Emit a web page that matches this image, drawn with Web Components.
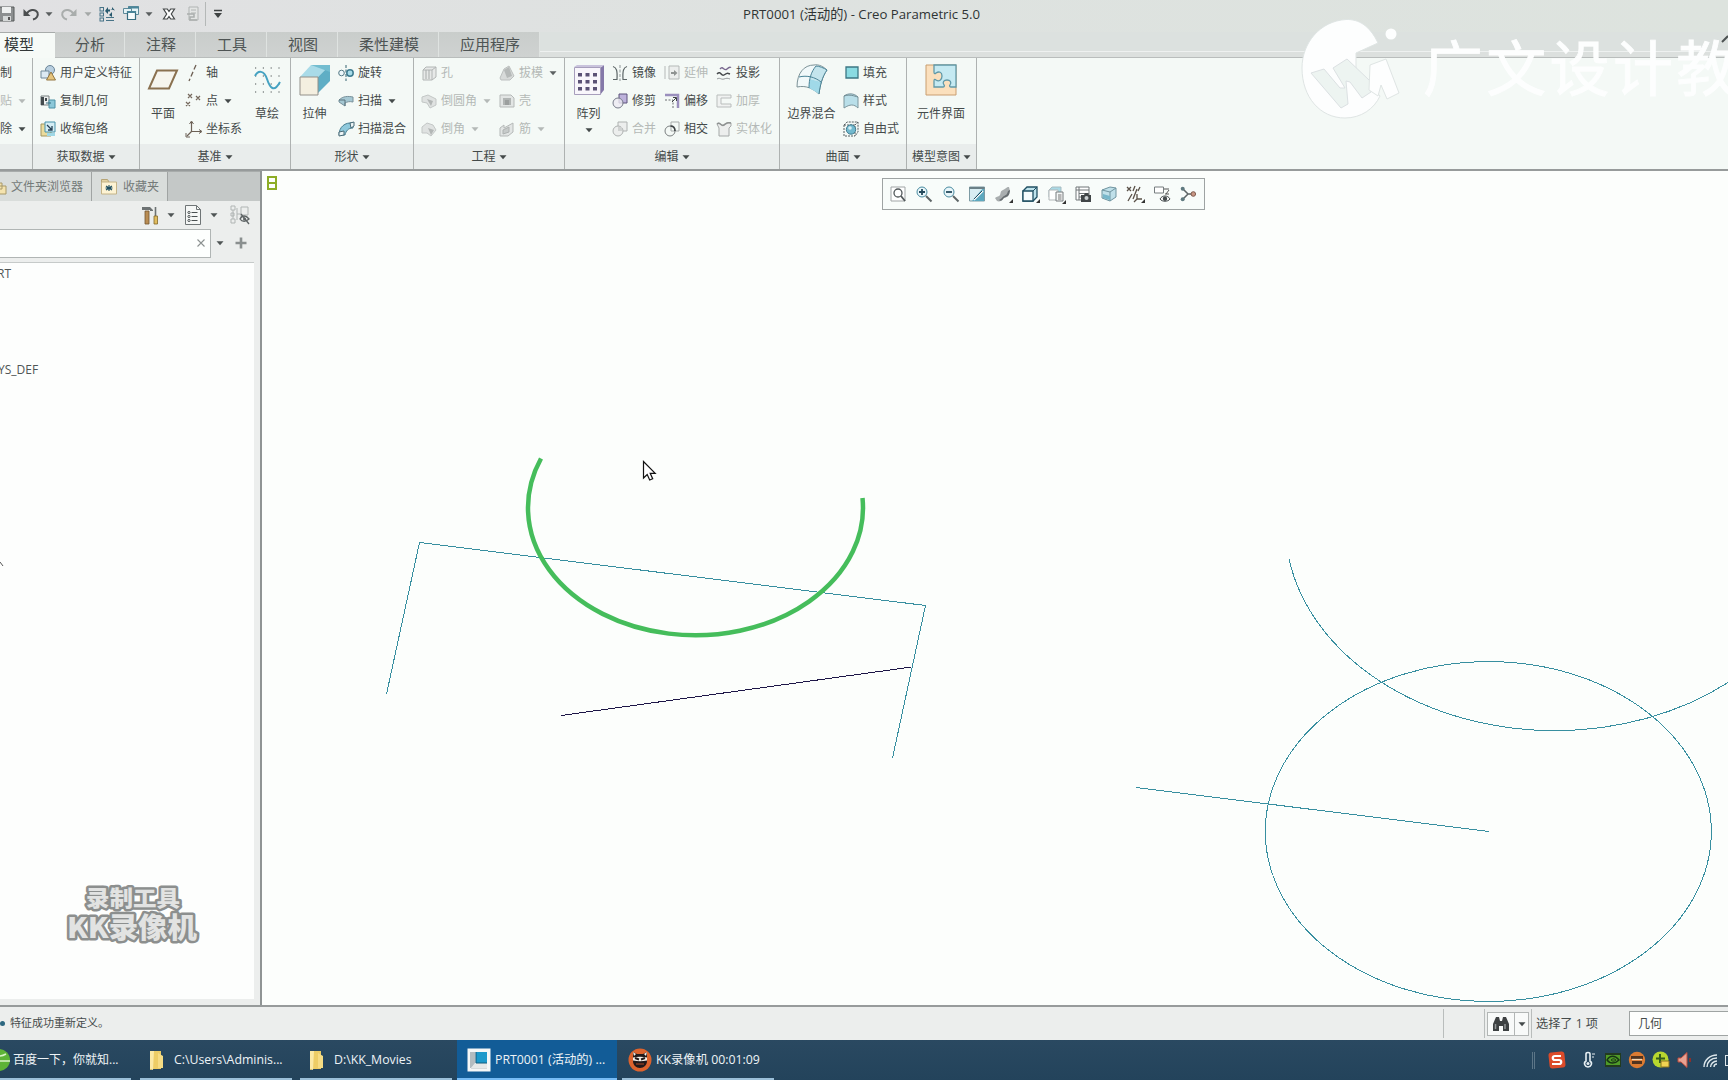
<!DOCTYPE html>
<html lang="zh-CN">
<head>
<meta charset="utf-8">
<title>PRT0001 (活动的) - Creo Parametric 5.0</title>
<style>
  * { box-sizing: border-box; }
  html, body { margin: 0; width: 1728px; height: 1080px; overflow: hidden; }
  body { font: 12px/16px "Open Sans", "Noto Sans CJK SC", sans-serif; color: #444a4a; }
</style>
</head>
<body>
<creo-window>
  <quick-bar slot="title"></quick-bar>

  <ribbon-tabs slot="tabs">
    <ribbon-tab active style="width:55px;padding-left:4px">模型</ribbon-tab>
    <ribbon-tab style="width:70px;padding-left:20px">分析</ribbon-tab>
    <ribbon-tab style="width:71px;padding-left:21px">注释</ribbon-tab>
    <ribbon-tab style="width:71px;padding-left:21px">工具</ribbon-tab>
    <ribbon-tab style="width:71px;padding-left:21px">视图</ribbon-tab>
    <ribbon-tab style="width:101px;padding-left:21px">柔性建模</ribbon-tab>
    <ribbon-tab style="width:101px;padding-left:21px">应用程序</ribbon-tab>
  </ribbon-tabs>

  <ribbon-group slot="ribbon" style="width:33px">
    <ribbon-column>
      <ribbon-button>制</ribbon-button>
      <ribbon-button menu disabled>贴</ribbon-button>
      <ribbon-button menu>除</ribbon-button>
    </ribbon-column>
  </ribbon-group>
  <ribbon-group slot="ribbon" label="获取数据" style="width:107px;--inset:7px">
    <ribbon-column>
      <ribbon-button icon="udf">用户定义特征</ribbon-button>
      <ribbon-button icon="copygeom">复制几何</ribbon-button>
      <ribbon-button icon="shrink">收缩包络</ribbon-button>
    </ribbon-column>
  </ribbon-group>
  <ribbon-group slot="ribbon" label="基准" style="width:151px">
    <ribbon-big icon="plane" style="width:46px">平面</ribbon-big>
    <ribbon-column style="width:58px">
      <ribbon-button icon="axis">轴</ribbon-button>
      <ribbon-button icon="point" menu>点</ribbon-button>
      <ribbon-button icon="csys">坐标系</ribbon-button>
    </ribbon-column>
    <ribbon-big icon="sketch" style="width:46px">草绘</ribbon-big>
  </ribbon-group>
  <ribbon-group slot="ribbon" label="形状" style="width:123px">
    <ribbon-big icon="extrude" style="width:47px">拉伸</ribbon-big>
    <ribbon-column>
      <ribbon-button icon="revolve">旋转</ribbon-button>
      <ribbon-button icon="sweep" menu>扫描</ribbon-button>
      <ribbon-button icon="blend">扫描混合</ribbon-button>
    </ribbon-column>
  </ribbon-group>
  <ribbon-group slot="ribbon" label="工程" style="width:151px;--inset:7px">
    <ribbon-column style="width:78px">
      <ribbon-button icon="hole" disabled>孔</ribbon-button>
      <ribbon-button icon="round" menu disabled>倒圆角</ribbon-button>
      <ribbon-button icon="chamfer" menu disabled>倒角</ribbon-button>
    </ribbon-column>
    <ribbon-column>
      <ribbon-button icon="draft" menu="dark" disabled>拔模</ribbon-button>
      <ribbon-button icon="shell" disabled>壳</ribbon-button>
      <ribbon-button icon="rib" menu disabled>筋</ribbon-button>
    </ribbon-column>
  </ribbon-group>
  <ribbon-group slot="ribbon" label="编辑" style="width:215px">
    <ribbon-big icon="pattern" menu style="width:47px">阵列</ribbon-big>
    <ribbon-column style="width:52px">
      <ribbon-button icon="mirror">镜像</ribbon-button>
      <ribbon-button icon="trim">修剪</ribbon-button>
      <ribbon-button icon="merge" disabled>合并</ribbon-button>
    </ribbon-column>
    <ribbon-column style="width:52px">
      <ribbon-button icon="extend" disabled>延伸</ribbon-button>
      <ribbon-button icon="offset">偏移</ribbon-button>
      <ribbon-button icon="intersect">相交</ribbon-button>
    </ribbon-column>
    <ribbon-column>
      <ribbon-button icon="project">投影</ribbon-button>
      <ribbon-button icon="thicken" disabled>加厚</ribbon-button>
      <ribbon-button icon="solidify" disabled>实体化</ribbon-button>
    </ribbon-column>
  </ribbon-group>
  <ribbon-group slot="ribbon" label="曲面" style="width:127px">
    <ribbon-big icon="boundary" style="width:63px">边界混合</ribbon-big>
    <ribbon-column>
      <ribbon-button icon="fill">填充</ribbon-button>
      <ribbon-button icon="style">样式</ribbon-button>
      <ribbon-button icon="freestyle">自由式</ribbon-button>
    </ribbon-column>
  </ribbon-group>
  <ribbon-group slot="ribbon" label="模型意图" style="width:70px">
    <ribbon-big icon="component" style="width:68px">元件界面</ribbon-big>
  </ribbon-group>

  <side-panel slot="side"></side-panel>
  <model-canvas slot="canvas"></model-canvas>
  <status-bar slot="status"></status-bar>

  <task-bar slot="taskbar">
    <task-button icon="browser" style="width:131px;padding-left:0">百度一下，你就知...</task-button>
    <task-button icon="folder" style="width:152px">C:\Users\Adminis...</task-button>
    <task-button icon="folder" style="width:152px">D:\KK_Movies</task-button>
    <task-button icon="creo" active style="width:160px">PRT0001 (活动的) ...</task-button>
    <task-button icon="kk" style="width:152px">KK录像机 00:01:09</task-button>
  </task-bar>
</creo-window>
<brand-mark></brand-mark>
<recorder-mark></recorder-mark>

<script>
// icon name -> [box size, svg body]
const ICONS = {
  save: [16, '<path d="M-1 1H14V15H-1Z" fill="#8c8f90" stroke="#565a5b"/><path d="M2 1h9v6H2z" fill="#eef0f0"/><path d="M3 10h8v5H3z" fill="#d5d8d8"/><path d="M8 11h2v3H8z" fill="#555"/>'],
  undo: [16, '<path d="M.5 3v7h7z" fill="#4c4f50"/><path d="M3.500 8C6 3.500 12 2.500 14.500 6.500c1 3-.5 6-4.500 7" fill="none" stroke="#4c4f50" stroke-width="2"/>'],
  redo: [16, '<path d="M15.500 3v7h-7z" fill="#a9adac"/><path d="M12.500 8C10 3.500 4 2.500 1.500 6.500c-1 3 .5 6 4.500 7" fill="none" stroke="#a9adac" stroke-width="2"/>'],
  regen: [16, '<g fill="none" stroke="#477387"><rect x="1" y="1.500" width="3.500" height="3.500"/><rect x="1" y="7" width="3.500" height="3"/><rect x="1" y="12" width="3.500" height="3"/><path d="M7 11.500h8M7 14.500h8"/></g><path d="M6 5 9 1v2.500h2v2H9V8zM16 4.500 13 1v2h-2M10 9l3-3v5" fill="#27586d"/>'],
  windows: [16, '<g fill="#e5f3f6" stroke="#5d8a9a"><path d="M5.500.5h10v8h-10z"/><path d="M.5 2.500h8v5h-8z"/></g><path d="M4.500 5.500h8v8h-8z" fill="#f6fbfc" stroke="#376d80" stroke-width="1.200"/><path d="M5 .5h11v2H5zM4 5h9v2H4z" fill="#4a8599"/>'],
  xout: [16, '<path d="M2.500 3h3.800L8 5.500 9.700 3h3.800l-3.200 5 3.200 5H9.700L8 10.500 6.300 13H2.500l3.200-5z" fill="#fff" stroke="#444849" stroke-width="1.200"/>'],
  closewin: [16, '<path d="M4 1h9v13H4z" fill="#e3e5e4" stroke="#b0b4b3"/><path d="M6 4h5M6 7h5" stroke="#b0b4b3"/><path d="M2 8h7v3H5v3h7" fill="none" stroke="#aaaead" stroke-width="1.500"/>'],
  custom: [10, '<path d="M1 1.500h8" stroke="#3e4242" stroke-width="1.500"/><path d="M1 4h8L5 9z" fill="#3e4242"/>'],
  caret: [8, '<path d="M.5 2.300h7L4 6.300z" fill="currentColor"/>'],

  udf: [16, '<circle cx="10" cy="5" r="4.500" fill="#b8cfe0" stroke="#6b8598"/><path d="M1 6h8v7H1z" fill="#dceaf3" stroke="#70899a"/><path d="m11 7 4.500 8h-9z" fill="#e6c57e" stroke="#937740"/>'],
  copygeom: [16, '<path d="M1 3h8v9H1z" fill="#edf0ef" stroke="#777f80"/><path d="M1 4h3v8H1zM5 5h2v3H5z" fill="#434b4e"/><path d="M9 7h6v8H9z" fill="#8cc8d9" stroke="#4c91a5"/><path d="M6 10h5" stroke="#346d80"/>'],
  shrink: [16, '<path d="M1 3h10v12H1z" fill="#eadb9c" stroke="#a29660"/><path d="M5 1h10v10H5z" fill="#d4edf4" stroke="#4692aa"/><path d="m7 4 5 5M12 5v4H8" fill="none" stroke="#243f53" stroke-width="1.300"/><path d="M7 12h8v3H7z" fill="#9fd8e6"/>'],
  plane: [32, '<path d="M10 6.500h20L22 24.500H2z" fill="#f6f5ee" stroke="#8a7150" stroke-width="2"/>'],
  axis: [16, '<path d="M10 0 3 16" stroke="#6d5f53" stroke-width="1.300" stroke-dasharray="5 2.500"/>'],
  point: [16, '<path d="m2 1 4 4m0-4L2 5m8-2 4 4m0-4-4 4M0 9l4 4m0-4-4 4" stroke="#75695d" stroke-width="1.200"/>'],
  csys: [16, '<path d="M5.500 1v9.500H15M5.500 10.500 1 15" fill="none" stroke="#6c6156" stroke-width="1.200"/><path d="m3.500 3 2-3 2 3M13 8.500l3 2-3 2M0 12v4h4" fill="none" stroke="#6c6156"/>'],
  sketch: [32, '<path d="M4 4h26M4 12h26M4 20h26M4 28h26" stroke="#4b5253" stroke-width="1.200" stroke-dasharray="1.200 6.600"/><path d="M4 12c3-6 9-6 12 3s7 14 13 3" fill="none" stroke="#45a2c2" stroke-width="2"/>'],
  extrude: [32, '<path d="M1 13 12 1h19L19 13z" fill="#a9dbe8"/><path d="M19 13 31 1v16L19 29z" fill="#5faec5"/><path d="M12 1h19v7z" fill="#73bdd0"/><path d="M1 13h18v18H1z" fill="#f4efe0" stroke="#93908a"/>'],
  revolve: [16, '<path d="M8 0v16" stroke="#356271" stroke-dasharray="3 1.500"/><circle cx="3.500" cy="8" r="2.800" fill="#eef8fb" stroke="#547985"/><circle cx="12" cy="8" r="3.200" fill="#a7dbe8" stroke="#3e7c90" stroke-width="1.500"/>'],
  sweep: [16, '<path d="M1 7c4-4 9-4 14-3v5c-4-1-6 0-8 1v3l-6-4z" fill="#a5c8d3" stroke="#77909a"/><path d="M1 7h6v6" fill="none" stroke="#5b737d"/>'],
  blend: [16, '<path d="M1 14C1 6 7 1 15 2v5c-5 0-7 3-8 7z" fill="#8fc9dc" stroke="#4c7f91"/><path d="M1 15v-4l5-1v4zM12 2l4-1v4l-3 2z" fill="#edf5f6" stroke="#486a76"/>'],
  hole: [16, '<path d="M2 5h9v10H2zM2 5l3-3h10v10l-4 3M11 5l4-3" fill="#e7e9e8" stroke="#b2b6b5"/><path d="M5 5v9M8 5v9" stroke="#a7abaa"/>'],
  round: [16, '<path d="M1 4l6-2 8 4v6l-6 3-3-5-5-1z" fill="#dfe2e1" stroke="#c3c7c6"/><path d="m6 6 6 2-2 5z" fill="#b3b7b6"/>'],
  chamfer: [16, '<path d="m1 6 5-4 6 2 3 5-5 6-4-3H1z" fill="#dfe2e1" stroke="#c3c7c6"/><path d="m7 7 6 2-3 5z" fill="#b3b7b6"/>'],
  draft: [16, '<path d="M1 13 5 4l5-3 5 10-4 4H2z" fill="#d7dad9" stroke="#bcc0bf"/><path d="m5 5 3 8 5-2-3-9" fill="#b5b9b8"/>'],
  shell: [16, '<path d="M1 2h11l3 3v9H1z" fill="#e2e5e4" stroke="#b5b9b8"/><path d="M4 5h8v7H4z" fill="#b1b5b4"/><path d="M6 7h4v5H6z" fill="#9b9f9e"/>'],
  rib: [16, '<path d="m1 7 4-3v3l9-5v9l-5 4H1z" fill="#e2e5e4" stroke="#b5b9b8"/><path d="M4 13V9l6-3v5z" fill="#c7cbca" stroke="#aeb2b1"/>'],
  pattern: [32, '<path d="M27 4 31 1v25l-4 5z" fill="#8478a8"/><path d="M1 3 4 1h27l-4 3z" fill="#c9c3dc"/><path d="M1.500 3.500h26v27h-26z" fill="#f8f6fb" stroke="#a79ebc"/><path d="M5 9h4v3.500H5zM12.500 9h4v3.500h-4zM20 9h4v3.500h-4zM5 16h4v3.500H5zM12.500 16h4v3.500h-4zM20 16h4v3.500h-4zM5 23h4v3.500H5zM12.500 23h4v3.500h-4zM20 23h4v3.500h-4z" fill="#5b5276"/>'],
  mirror: [16, '<path d="M8 0v16" stroke="#8d9596" stroke-dasharray="3 1.500"/><path d="M1 1.500c3.500 1 4.500 4 4 13H1M15 1.500c-3.500 1-4.500 4-4 13h4" fill="none" stroke="#5d6667" stroke-width="1.200"/>'],
  trim: [16, '<path d="M7 1h8v9H7z" fill="#bdb2db" stroke="#5c527c"/><circle cx="6" cy="10" r="5" fill="#eceaf3" fill-opacity=".8" stroke="#777b8a"/>'],
  merge: [16, '<path d="M6 1h9v9H6z" fill="#eceeed" stroke="#aeb2b1"/><circle cx="6" cy="10" r="5" fill="#eceeed" stroke="#aeb2b1"/><path d="M6 6h4v4H6z" fill="#cfd2d1"/>'],
  extend: [16, '<path d="M5 1h10v13H5z" fill="#eceeed" stroke="#b5b9b8"/><path d="M1 1v13" stroke="#b5b9b8"/><path d="M7 7h3V5l3.500 3-3.500 3V9H7z" fill="#8f9392"/>'],
  offset: [16, '<path d="M1 2h13v13" fill="none" stroke="#9a8fbd" stroke-width="2.500"/><path d="M1 7h8v8" fill="none" stroke="#6a6e70" stroke-dasharray="2 1.500"/><path d="m8 9 4-4M9 4.500h3.500V8" fill="none" stroke="#3e4244"/>'],
  intersect: [16, '<path d="M7 1h8v9H7z" fill="none" stroke="#a7abaa"/><circle cx="6" cy="10" r="5" fill="none" stroke="#7b8081"/><path d="M6.500 5C10 5 11 8 11 10" fill="none" stroke="#3d4244" stroke-width="1.600"/>'],
  project: [16, '<path d="M4 4c3-4 4 3 7 0s3-1 4-2" fill="none" stroke="#79688f" stroke-width="1.300"/><path d="M1 9c4-4 4 3 7 1s3-2 6-1" fill="none" stroke="#44484a" stroke-width="1.500"/><path d="M1 14c3-2 4 1 7 0s3-1 6 0" fill="none" stroke="#979b9d"/>'],
  thicken: [16, '<path d="M15 2H1v12h14v-3H5V5h10z" fill="#f0f2f1" stroke="#b9bdbc"/>'],
  solidify: [16, '<path d="M1 3c3-3 4 3 7 1s3-3 7-2v3l-2 2v8H3V7z" fill="#eceeed" stroke="#a5a9a8"/><path d="M1 3c3-3 4 3 7 1s3-3 7-2" fill="none" stroke="#8e9291" stroke-width="1.600"/>'],
  boundary: [32, '<path d="M1 23C1 9 8 1 18 1c5-1 10 2 13 5-5 7-7 16-8 24-6-5-12-9-22-7z" fill="#f1f9fa" stroke="#7c9297"/><path d="M20 2c4 0 8 2 11 4-3 4-5 8-6 12l-11-3c1-5 3-9 6-13z" fill="#c4e5ed"/><path d="m14 15 11 3c-1 4-2 8-2 12-3-2-6-4-10-6 0-3 0-6 1-9z" fill="#a0d9e8"/><path d="M20 2c3 0 8 2 11 4-5 7-7 16-8 24M3 13c8-2 16 0 22 5M13 24c0-9 2-16 7-22" fill="none" stroke="#4a8497"/>'],
  fill: [16, '<path d="M3 2h12v11H3z" fill="#8adbe2" stroke="#3c7784" stroke-width="1.300"/>'],
  style: [16, '<path d="M1 3c4-3 10-3 14 1v11c-4-4-8-4-14 0z" fill="#b9dfe9" stroke="#7d969d"/><path d="M1 3c6-2 10 0 14 1" fill="none" stroke="#718c93"/>'],
  freestyle: [16, '<path d="M1 4h11v11H1zM1 4l3-3h11v10l-3 4M12 4l3-3" fill="none" stroke="#555e61" stroke-dasharray="2 1"/><circle cx="8" cy="8.500" r="4.700" fill="#72b9ce" stroke="#3f7d91"/><circle cx="7" cy="7" r="1.800" fill="#d2eef4"/>'],
  component: [32, '<path d="M1 1h30v30H1z" fill="#fbe0bd" stroke="#c99e70"/><path d="M9 1h22v22h-5c-1 0-2-1-1-2 2-3 0-5-3-5s-5 2-3 5c1 1 0 2-1 2H9v-6c0-2 1-2 2-1 3 2 6 0 6-4s-3-5-6-3c-1 1-2 1-2-1z" fill="#c5eaf2" stroke="#6199a8" stroke-width="1.300"/>'],

  folderTab: [16, '<path d="M-1 1h4l2 3h3v6H-1zM3 7h9v8H3z" fill="#f4e3ae" stroke="#a89968"/>'],
  favTab: [16, '<path d="M.5 3V.5h6L8 3" fill="#e2d2a2" stroke="#b6a475"/><path d="M.5 3h15v12H.5z" fill="#fdf3d3" stroke="#c4b488"/><path d="M8 6v6M5 7l6 4M11 7l-6 4M4.500 9h7" stroke="#1f5063" stroke-width="1.100"/>'],
  hammer: [18, '<path d="M0 1h8l3 3v1H8V4H0z" fill="#6d7273"/><path d="M3 5h4v13H3z" fill="#b98d54" stroke="#735630" stroke-width=".8"/><path d="M13.500 1v9" stroke="#6d7273" stroke-width="1.600"/><path d="M12 10h3.500v8H12z" fill="#e1bd5f" stroke="#84682a" stroke-width=".8"/>'],
  listdoc: [20, '<path d="M2.500.5h11l4 4v15h-15z" fill="#f5f7f6" stroke="#6f7576"/><path d="M13.500.5v4h4" fill="none" stroke="#6f7576"/><path d="M8.500 7.500h6M8.500 11.500h6M8.500 15.500h6" stroke="#4a5051"/><g fill="#fff" stroke="#4a5051"><circle cx="6" cy="7.500" r="1.100"/><circle cx="6" cy="11.500" r="1.100"/><circle cx="6" cy="15.500" r="1.100"/></g>'],
  treehide: [20, '<g fill="none" stroke="#b0b5b4"><path d="M1 1h4v4H1zM1 14h4v4H1zM1 8h3v3H1zM3 5v9M7 3v12M7 9h4M11 2v10M11 2h7v8h-7"/></g><path d="M10 14c2-4 6-4 9 0-3 3-7 3-9 0zM11 9l8 10" fill="none" stroke="#5e6465" stroke-width="1.300"/><circle cx="14.500" cy="14" r="1.500" fill="#5e6465"/>'],
  clear: [8, '<path d="m.5.5 7 7m0-7-7 7" stroke="#8b9191" stroke-width="1.100"/>'],
  plus: [12, '<path d="M6 .5v11M.5 6h11" stroke="#8a8f8f" stroke-width="2.600"/>'],
  gridmark: [14, '<path d="M3 1h8v12H3zM3 7h8" fill="none" stroke="#8dad25" stroke-width="2"/>'],

  refit: [16, '<path d="M1 1h14v14H1z" fill="#fff" stroke="#a0a5a6"/><circle cx="8" cy="7" r="4" fill="none" stroke="#51585a" stroke-width="1.300"/><path d="m11 10 4 5" stroke="#51585a" stroke-width="1.800"/>'],
  zoomin: [16, '<circle cx="6" cy="6" r="5" fill="#e9f6fa" stroke="#498ba0"/><path d="M6 3v6M3 6h6" stroke="#244a5c" stroke-width="1.800"/><path d="m10 10 5.500 5.500" stroke="#5e6566" stroke-width="2"/>'],
  zoomout: [16, '<circle cx="6" cy="6" r="5" fill="#e9f6fa" stroke="#498ba0"/><path d="M3 6h6" stroke="#244a5c" stroke-width="1.800"/><path d="m10 10 5.500 5.500" stroke="#5e6566" stroke-width="2"/>'],
  repaint: [16, '<path d="M.5 1h15v14H.5z" fill="#d8edf2" stroke="#7d9ba4"/><path d="M15 1v14H3z" fill="#5ea9bf"/><path d="M.5 1h15v2H.5z" fill="#6b8087"/><path d="M14 5 5 14" stroke="#fff" stroke-width="1.500"/><path d="M13 5 5 13" stroke="#264e5d"/>'],
  shade: [16, '<path d="M0 12c2-2 4-1 5-3s0-4 3-5 3-3 6-3l1 4c-2 1-1 3-2 5s-4 1-5 3-4 3-6 2z" fill="#a9aeaf"/><path d="M4 14c3-1 3-3 5-4s3-1 4-5l2-1c0 3-1 5-2 6s-4 1-5 3-3 2-4 1z" fill="#666d70"/><path d="M18 13v4h-4z" fill="#333"/>'],
  cube: [16, '<path d="m1 5 4-4h10v10l-4 4H1z" fill="#bfe3ec" stroke="#1f4f62" stroke-width="1.300"/><path d="M1 5h10v10H1z" fill="#f6fcfd" stroke="#1f4f62" stroke-width="1.300"/><path d="m11 5 4-4" stroke="#1f4f62"/><path d="M18 13v4h-4z" fill="#333"/>'],
  saved: [16, '<path d="m1 4 3-3h9v10H1z" fill="#a9d9e5" stroke="#a8bcc1"/><path d="M1 4h9v10H1z" fill="#fff" stroke="#b1b7b8"/><path d="M8 6h7v9H8z" fill="#f5f6f6" stroke="#767c7e"/><path d="M10 9h3.500M10 11h3.500M10 13h3.500" stroke="#777"/><path d="M18 14v4h-4z" fill="#333"/>'],
  viewmgr: [16, '<path d="M1 1h13v13H1zM1 4h13M4 1v13M4 7.500h10M4 11h10" fill="#fff" stroke="#717779"/><path d="M6 9h3l1-2h3l1 2h2v7H6z" fill="#404547"/><circle cx="11.500" cy="12" r="2" fill="#cbd1d3"/>'],
  persp: [16, '<path d="m1 4 8-3 6 1v9l-6 4-8-3z" fill="#bfe0e9" stroke="#6f949f"/><path d="m1 4 8 2v9M9 6l6-4" fill="none" stroke="#6f949f"/><path d="m2 8 7 2v4l-7-2z" fill="#77b7ca"/>'],
  datum: [16, '<path d="m0 1 4 4m0-4L0 5M8 0 6 5M13 1l-2 4M5 8 1 15M10 3 6 13M10 8v5h5M10 13l-3 3" fill="none" stroke="#5a5148" stroke-width="1.300"/><path d="M18 13v4h-4z" fill="#333"/>'],
  annot: [16, '<path d="M.5 1h9v6h-9z" fill="#fff" stroke="#767d7f"/><path d="M10 3h5M12 8l3-4M11 8h4" stroke="#555" fill="none"/><path d="M6 13c2-4 8-4 10 0-2 3-8 3-10 0z" fill="#fff" stroke="#454b4d"/><circle cx="11" cy="12.800" r="2.200" fill="#454b4d"/>'],
  spin: [16, '<path d="m3 3 5 5-5 5M8 8h5" fill="none" stroke="#5d6466" stroke-width="1.500"/><circle cx="2.700" cy="2.700" r="2" fill="#607a80"/><circle cx="2.700" cy="13.300" r="2" fill="#607a80"/><circle cx="13.300" cy="8" r="2.300" fill="#c89684" stroke="#805b4e"/>'],

  binoc: [18, '<path d="M1 16V9l3-7h3l1 4h2l1-4h3l3 7v7h-6v-5H7v5z" fill="#3d4142"/><path d="M3.500 9v5M13 9v5" stroke="#929798" stroke-width="1.500"/>'],
  browser: [24, '<circle cx="8" cy="12" r="11" fill="#5db336"/><path d="M-3 13h22M1 6c5 3 9 3 14 0M8 1v22" stroke="#d9f3c7" stroke-width="1.500" fill="none"/>'],
  folder: [24, '<path d="M5 3h11v18H8l-3 1z" fill="#edcd65"/><path d="M5 3h4l-1 19-3-1z" fill="#fbe9a5"/><path d="m13 5 5 3v12h-5z" fill="#f6dc83"/>'],
  creo: [24, '<path d="M.5.5h23v23H.5z" fill="#f5f7f7"/><path d="M3 4h17v17H4z" fill="#d6dadb"/><path d="M3 4h5v12l-4 4H3z" fill="#b3bcc0"/><path d="M9 4h11v11H9z" fill="#1d99cb"/><path d="M4 20 8 15h12v5z" fill="#e5e8e8"/><path d="M9 4v11h11" fill="none" stroke="#135c7e"/>'],
  kk: [24, '<circle cx="12" cy="12" r="11.500" fill="#dd632d"/><path d="m5 4 4 2h6l4-2v9c0 4-3 7-7 7s-7-3-7-7z" fill="#21191a"/><path d="m5 4 3 2-2 2zM19 4l-3 2 2 2z" fill="#f6efe8"/><path d="M5 9.500c5-1 9-1 14 0v3c-5 1-9 1-14 0z" fill="#f6efe8"/><path d="m7 10 4 1.500M17 10l-4 1.500" stroke="#21191a" stroke-width="2"/><path d="M8 16h8" stroke="#b34a27"/>'],
  sogou: [18, '<rect x="1" y="1" width="16" height="16" rx="3" fill="#dc4b2a" transform="rotate(-6 9 9)"/><path d="M13 5H7c-3 0-3 4 0 4h4c3 0 3 4 0 4H4" fill="none" stroke="#fff" stroke-width="2.200"/>'],
  thermo: [18, '<path d="M6 3c0-2 4-2 4 0v7c3 2 1 6-2 6s-5-4-2-6z" fill="none" stroke="#e6eef2" stroke-width="1.600"/><circle cx="8" cy="12.500" r="1.500" fill="#e6eef2"/><path d="M12 3h3M12 6h2" stroke="#e6eef2"/>'],
  nvidia: [18, '<path d="M1 2h16v14H1z" fill="#223b20"/><path d="M2 4h14v10H2z" fill="#4f9b28"/><path d="M3 9c3-5 8-5 12 0-4 4-9 4-12 0z" fill="none" stroke="#173315" stroke-width="1.400"/><path d="M7 9c2-2 4-1 5 0-2 2-4 1-5 0z" fill="none" stroke="#173315"/>'],
  kktray: [18, '<circle cx="9" cy="9" r="8.200" fill="#db7b32"/><path d="M3 5h12v3H3zM4 10h10v3H4z" fill="#50331f"/><path d="M4 8.500h10" stroke="#f4d8b3" stroke-width="1.300"/>'],
  guard: [18, '<circle cx="8.500" cy="8.500" r="8" fill="#b8d72f"/><path d="M8 3v9M4 7.500h9" stroke="#345d1d" stroke-width="2"/><path d="M9 10h8v6H9z" fill="#f1d352" stroke="#8b7523"/>'],
  speaker: [18, '<path d="M2 7h3l6-5.500v15L5 11H2z" fill="#e8a292" stroke="#bb4b3c"/><path d="M14 7v4" stroke="#8b2f2b" stroke-width="2"/>'],
  wifi: [18, '<path d="M3 16C3 9 9 4 16 4M6 16c0-5 4-9 10-9M9.500 16c0-3 3-6 6.500-6M13 16c0-2 1-3 3-3" fill="none" stroke="#dce6eb" stroke-width="1.400"/>'],
};

const define = (name, html) => {
  customElements.define(name, class extends HTMLElement {
    connectedCallback() {
      if (this.shadowRoot) return;
      this.attachShadow({ mode: 'open' });
      this.shadowRoot.innerHTML = typeof html === 'function' ? html(this) : html;
    }
  });
};

define('ui-icon', el => {
  const [size, body] = ICONS[el.getAttribute('name')];
  return `
    <style>
      :host { display: block; flex: none; width: ${size}px; height: ${size}px; }
      svg { display: block; overflow: visible; }
    </style>
    <svg width="${size}" height="${size}" viewBox="0 0 ${size} ${size}">${body}</svg>`;
});

define('creo-window', `
  <style>
    :host { display: flex; flex-direction: column; width: 1728px; height: 1080px; background: #eceeed; }
    .ribbon { display: flex; box-sizing: border-box; height: 114px; flex: none; background: #f4f9f6; border-top: 1px solid #b9bdbc; border-bottom: 2px solid #979b9b; }
    .work { display: flex; flex: 1; min-height: 0; }
  </style>
  <slot name="title"></slot>
  <slot name="tabs"></slot>
  <div class="ribbon"><slot name="ribbon"></slot></div>
  <div class="work"><slot name="side"></slot><slot name="canvas"></slot></div>
  <slot name="status"></slot>
  <slot name="taskbar"></slot>
`);

define('quick-bar', `
  <style>
    :host { display: flex; align-items: center; box-sizing: border-box; height: 32px; flex: none; padding-bottom: 4px; color: #5a5e5f;
      background: linear-gradient(90deg, #e1e1e3, #dee2e0 45%, #dde3de); }
    .sep { width: 1px; height: 24px; background: #b4b8b7; margin-left: 4px; }
    .title { margin-left: 520px; font-size: 13.200px; color: #2f3434; white-space: nowrap; }
  </style>
  <ui-icon name="save"></ui-icon>
  <ui-icon name="undo" style="margin-left:7px"></ui-icon>
  <ui-icon name="caret" style="margin-left:6px"></ui-icon>
  <ui-icon name="redo" style="margin-left:8px"></ui-icon>
  <ui-icon name="caret" style="margin-left:7px;color:#a4a8a7"></ui-icon>
  <ui-icon name="regen" style="margin-left:7px"></ui-icon>
  <ui-icon name="windows" style="margin-left:8px"></ui-icon>
  <ui-icon name="caret" style="margin-left:6px"></ui-icon>
  <ui-icon name="xout" style="margin-left:8px"></ui-icon>
  <ui-icon name="closewin" style="margin-left:8px"></ui-icon>
  <div class="sep"></div>
  <ui-icon name="custom" style="margin-left:7px"></ui-icon>
  <div class="title">PRT0001 (活动的) - Creo Parametric 5.0</div>
`);

define('ribbon-tabs', `
  <style>
    :host { display: flex; position: relative; height: 25px; flex: none; background: linear-gradient(#dce1df 19px, #eef1f0 19px 20px, #dce0de 20px); }
    svg { position: absolute; right: 0; top: 2px; }
  </style>
  <slot></slot>
  <svg width="8" height="9"><path d="m2 8 6-6" stroke="#4c5152" stroke-width="2"/></svg>
`);

define('ribbon-tab', `
  <style>
    :host { display: block; box-sizing: border-box; height: 25px; line-height: 25px; font-size: 15px; white-space: nowrap;
      color: #4e5454; background: linear-gradient(#c9cdcb, #cfd2d1); border-right: 1px solid #dfe3e1; }
    :host([active]) { height: 26px; background: #f6faf7; border-right: 0; border-top: 1px solid #a7abaa; color: #333838; line-height: 23px; }
  </style>
  <slot></slot>
`);

define('ribbon-group', el => `
  <style>
    :host { display: flex; flex-direction: column; box-sizing: border-box; flex: none; border-right: 1px solid #aeb2b1; overflow: hidden; }
    .body { display: flex; box-sizing: border-box; height: 86px; flex: none; padding-left: var(--inset, 0); }
    .foot { display: flex; align-items: center; justify-content: center; gap: 3px; flex: 1; background: #e9edec; color: #444a4a; white-space: nowrap; }
  </style>
  <div class="body"><slot></slot></div>
  <div class="foot">${el.hasAttribute('label') ? `<span>${el.getAttribute('label')}</span><ui-icon name="caret"></ui-icon>` : ''}</div>
`);

define('ribbon-column', `
  <style>
    :host { display: flex; flex-direction: column; flex: none; padding-top: 1px; }
  </style>
  <slot></slot>
`);

define('ribbon-button', el => {
  const icon = el.getAttribute('icon');
  return `
  <style>
    :host { display: flex; align-items: center; height: 28px; gap: 4px; white-space: nowrap; color: #444a4a; }
    :host([disabled]) { color: #b4b9b7; }
    .caret { margin-left: 2px; }
    :host([menu=dark]) .caret { color: #5c6162; }
  </style>
  ${icon ? `<ui-icon name="${icon}"></ui-icon>` : ''}
  <span><slot></slot></span>
  ${el.hasAttribute('menu') ? '<ui-icon class="caret" name="caret"></ui-icon>' : ''}`;
});

define('ribbon-big', el => `
  <style>
    :host { display: flex; flex-direction: column; align-items: center; flex: none; padding-top: 6px; white-space: nowrap; }
    span { margin: 10px 0 4px; }
  </style>
  <ui-icon name="${el.getAttribute('icon')}"></ui-icon>
  <span><slot></slot></span>
  ${el.hasAttribute('menu') ? '<ui-icon name="caret"></ui-icon>' : ''}
`);

define('side-panel', `
  <style>
    :host { display: flex; flex-direction: column; box-sizing: border-box; width: 262px; flex: none; background: #eceeed; border-right: 2px solid #8f9494; color: #4f5555; }
    .tabs { display: flex; box-sizing: border-box; height: 30px; flex: none; background: #c4c8c7; border-top: 1px solid #a8acab; }
    .tab { display: flex; align-items: center; box-sizing: border-box; gap: 6px; background: #d9dddb; border-right: 1px solid #a0a4a3; white-space: nowrap; color: #747a79; }
    .tools, .search { display: flex; align-items: center; height: 28px; flex: none; }
    .field { display: flex; align-items: center; justify-content: flex-end; box-sizing: border-box; width: 211px; height: 29px; padding-right: 5px;
      background: #fdfffe; border: 1px solid #b0b5b4; border-left: 0; }
    .tree { flex: 1; margin: 5px 6px 6px 0; background: #fdfefd; border-top: 1px solid #c6cac9; overflow: hidden; display: flex; flex-direction: column; align-items: flex-start; }
    .tree span { white-space: nowrap; }
  </style>
  <div class="tabs">
    <div class="tab" style="width:92px;gap:1px"><ui-icon name="folderTab" style="margin-left:-6px"></ui-icon>文件夹浏览器</div>
    <div class="tab" style="width:76px;padding-left:9px"><ui-icon name="favTab"></ui-icon>收藏夹</div>
  </div>
  <div class="tools">
    <ui-icon name="hammer" style="margin-left:142px"></ui-icon>
    <ui-icon name="caret" style="margin-left:7px"></ui-icon>
    <ui-icon name="listdoc" style="margin-left:8px"></ui-icon>
    <ui-icon name="caret" style="margin-left:7px"></ui-icon>
    <ui-icon name="treehide" style="margin-left:12px"></ui-icon>
  </div>
  <div class="search">
    <div class="field"><ui-icon name="clear"></ui-icon></div>
    <ui-icon name="caret" style="margin-left:5px"></ui-icon>
    <ui-icon name="plus" style="margin-left:11px"></ui-icon>
  </div>
  <div class="tree">
    <span style="margin:3px 0 0 -3px">RT</span>
    <span style="margin:80px 0 0 -2px">YS_DEF</span>
    <svg width="6" height="8" style="margin-top:182px"><path d="m0 2 3 4" stroke="#555"/></svg>
  </div>
`);

define('view-toolbar', `
  <style>
    :host { display: flex; align-items: center; justify-content: space-between; box-sizing: border-box; width: 323px; height: 32px; padding: 0 8px 0 7px;
      background: #f8fcfa; border: 1px solid #9ea3a3; }
  </style>
  ${['refit', 'zoomin', 'zoomout', 'repaint', 'shade', 'cube', 'saved', 'viewmgr', 'persp', 'datum', 'annot', 'spin']
    .map(name => `<ui-icon name="${name}"></ui-icon>`).join('')}
`);

// The sketch uses window coordinates, shifted by the canvas origin (262, 171)
define('model-canvas', `
  <style>
    :host { display: block; position: relative; flex: 1; background: #fcfefc; overflow: hidden; }
    .mark { position: absolute; left: 3px; top: 5px; }
    view-toolbar { position: absolute; left: 620px; top: 7px; }
    svg { display: block; }
  </style>
  <svg width="1466" height="834" viewBox="262 171 1466 834" fill="none">
    <g stroke="#388fa0" shape-rendering="crispEdges">
      <path d="M386.500 694 419.500 542.500 925.500 605.500 892.500 758"/>
      <path d="M1136 787.500 1489 831.500"/>
      <ellipse cx="1488.300" cy="831.500" rx="223" ry="170"/>
      <path d="M1289 559A270.500 206.500 0 0 0 1554 730.700A270.500 206.500 0 0 0 1728 682.500"/>
      <path d="M561 715.500 911.500 667" stroke="#1d1647"/>
    </g>
    <path d="M541 458.500A167.500 127.500 0 1 0 862.500 498" stroke="#45bd5b" stroke-width="4.500"/>
    <path d="M643.500 461.500v16.500l3.700-3.500 2.500 5.500 3-1.300-2.500-5.400h5z" fill="#fff" stroke="#111" stroke-width="1.200"/>
  </svg>
  <ui-icon class="mark" name="gridmark"></ui-icon>
  <view-toolbar></view-toolbar>
`);

define('status-bar', `
  <style>
    :host { display: flex; align-items: center; box-sizing: border-box; height: 35px; flex: none; background: #eceeed; border-top: 2px solid #979b9b; color: #454b4b; white-space: nowrap; }
    .dot { width: 5px; height: 5px; border-radius: 50%; background: #2c6780; margin-right: 5px; }
    .message { width: 1433px; font-size: 11px; padding-bottom: 2px; }
    .sep { width: 1px; height: 29px; background: #b9bdbc; }
    .find { display: flex; align-items: center; box-sizing: border-box; width: 42px; height: 24px; margin: 0 2px; background: #f8faf9; border: 1px solid #b2b6b5; }
    .find i { width: 1px; height: 22px; background: #b2b6b5; margin: 0 3px 0 4px; }
    .combo { box-sizing: border-box; width: 99px; height: 25px; line-height: 23px; padding-left: 8px; background: #fdfefd; border: 1px solid #9fa4a3; border-right: 0; }
  </style>
  <div class="dot"></div><span class="message">特征成功重新定义。</span>
  <div class="sep"></div><div class="sep" style="margin-left:40px"></div>
  <div class="find"><ui-icon name="binoc" style="margin-left:4px"></ui-icon><i></i><ui-icon name="caret"></ui-icon></div>
  <div class="sep"></div>
  <span style="margin-left:4px;width:93px;font-size:12.200px">选择了 1 项</span>
  <div class="combo">几何</div>
`);

define('task-bar', `
  <style>
    :host { display: flex; height: 40px; flex: none; background: linear-gradient(#2a4961, #23435b); }
    .tasks { display: flex; gap: 5px; }
    ::slotted(:first-child) { margin-right: 4px; }
    ::slotted(:nth-child(2)) { margin-right: 3px; }
    .tray { display: flex; align-items: center; gap: 6px; margin-left: auto; }
    .grip { width: 3px; height: 17px; box-sizing: border-box; border: solid #5c7587; border-width: 0 1px; }
    .edge { width: 3px; height: 11px; box-sizing: border-box; border: 1px solid #dce6eb; border-right: 0; }
  </style>
  <div class="tasks"><slot></slot></div>
  <div class="tray">
    <div class="grip" style="margin-right:7px"></div>
    <ui-icon name="sogou" style="margin-right:8px"></ui-icon>
    <ui-icon name="thermo"></ui-icon><ui-icon name="nvidia"></ui-icon><ui-icon name="kktray"></ui-icon>
    <ui-icon name="guard"></ui-icon><ui-icon name="speaker"></ui-icon><ui-icon name="wifi" style="margin-left:1px"></ui-icon>
    <div class="edge"></div>
  </div>
`);

define('task-button', el => `
  <style>
    :host { display: flex; align-items: center; gap: 4px; box-sizing: border-box; height: 40px; padding: 2px 0 0 10px; color: #eef3f6; font-size: 12.300px;
      border-bottom: 2px solid #9bbfd8; white-space: nowrap; overflow: hidden; }
    :host([active]) { background: #125c97; border-bottom-color: #77bcf5; }
    :host([icon=browser]) { font-size: 12px; }
    :host([icon=browser]) ui-icon { margin-left: -9px; margin-right: -6px; }
    :host([icon=folder]) { padding-left: 5px; }
    :host([icon=folder]) ui-icon { margin-right: 1px; }
    :host([icon=kk]) { padding-left: 6px; }
  </style>
  <ui-icon name="${el.getAttribute('icon')}"></ui-icon>
  <span><slot></slot></span>
`);

// channel logo over the title area
define('brand-mark', `
  <style>
    :host { position: absolute; left: 1295px; top: 10px; width: 433px; height: 112px; overflow: hidden; }
    svg { display: block; }
    text { font: 400 60px "Noto Sans CJK SC", sans-serif; letter-spacing: 3.300px; }
  </style>
  <svg width="433" height="112" viewBox="1295 10 433 112">
    <path d="M1378 43C1370 26 1359 19 1346 19.500 1320 21 1302 43 1302 68c0 29 18 50 43 50 16 0 29-9 35-22l-24-28V53z" fill="#fdfefe" stroke="#dfe5e4"/>
    <path d="M1311 73 1324 69 1340 88 1345 88 1333 68 1347 59 1369 80 1371 78 1371 92 1362 98 1350 82 1346 81 1348 104 1341 108z" fill="#edf4f1" stroke="#dce1e3" stroke-linejoin="round"/>
    <path d="m1370 65 16-6 13 34-12 6-6-14-3 11-9-6z" fill="#fdfefe" stroke="#dfe5e4" stroke-linejoin="round"/>
    <circle cx="1391" cy="34" r="5.500" fill="#fdfefe"/>
    <text x="1423" y="91" fill="#fdfefe" stroke="#fdfefe" stroke-width=".8">广文设计教</text>
  </svg>
`);

define('recorder-mark', `
  <style>
    :host { position: absolute; left: 60px; top: 878px; width: 150px; height: 72px; }
    svg { display: block; }
    text { font-family: "Noto Sans CJK SC", sans-serif; font-weight: 900; fill: #e2e3e2; stroke: #8c8f8e; stroke-width: 5px; stroke-linejoin: round; paint-order: stroke; }
  </style>
  <svg width="150" height="72">
    <text x="26" y="28" font-size="22" textLength="94" lengthAdjust="spacingAndGlyphs">录制工具</text>
    <text x="7" y="60" font-size="28" textLength="130" lengthAdjust="spacingAndGlyphs">KK录像机</text>
  </svg>
`);
</script>
</body>
</html>
